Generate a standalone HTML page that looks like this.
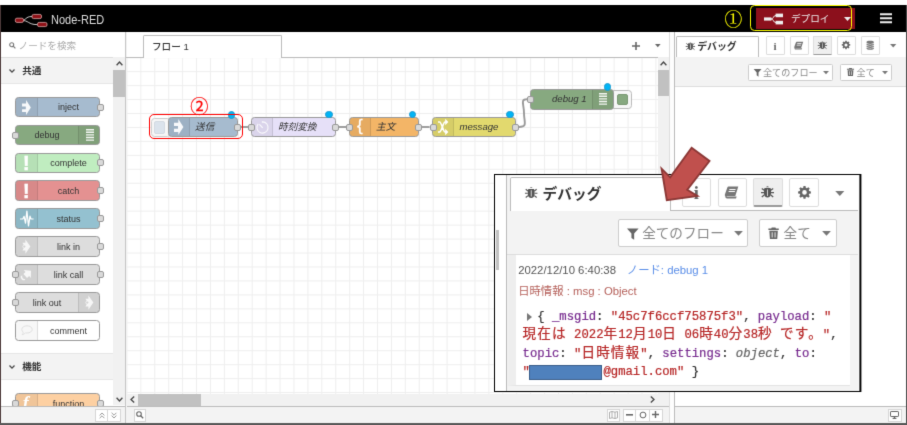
<!DOCTYPE html>
<html lang="ja"><head><meta charset="utf-8"><title>Node-RED</title>
<style>
*{box-sizing:border-box;margin:0;padding:0}
html,body{width:907px;height:425px;overflow:hidden;background:#fff}
body{filter:url(#soft)}
body{position:relative;font-family:"Liberation Sans","Noto Sans CJK JP",sans-serif;color:#555}
.a{position:absolute}
svg{position:absolute;overflow:visible}
/* header */
#hdr{left:1px;top:4.600px;width:906px;height:27.800px;background:#000}
#title{left:51px;top:13.8px;font-size:11px;line-height:13px;color:#ddd;white-space:nowrap;transform:scaleY(1.08);transform-origin:0 50%}
#deploy{left:756px;top:8.2px;width:99px;height:20.7px;background:#8c101c}
#deploytxt{left:791px;top:11.5px;font-size:9.6px;line-height:14px;color:#eee;white-space:nowrap;letter-spacing:0}
#ybox{left:750.3px;top:5.2px;width:102px;height:26.2px;border:1.2px solid #ffff00;border-radius:4.5px}
.circ{font-size:17px;line-height:20px;white-space:nowrap;font-family:"Noto Sans CJK JP","Liberation Sans",sans-serif}
/* palette */
#psearch{left:1.3px;top:32.4px;width:124px;height:25.2px;background:#fff;border-bottom:1px solid #ddd}
#psearchtxt{left:18.6px;top:40px;font-size:9.6px;line-height:12px;color:#aaa;white-space:nowrap}
.cat{left:1.3px;width:112px;height:26.6px;background:#f3f3f3;border-bottom:1px solid #e6e6e6}
.cattxt{left:22.2px;font-size:9.6px;line-height:12px;color:#333;font-weight:700;white-space:nowrap}
.sb{background:#f1f1f1}
.thumb{background:#c1c1c1}
.pn{left:15.4px;width:84.8px;height:20.8px;border:1px solid #999;border-radius:3.5px;font-size:9px;line-height:18.8px;color:#333;text-align:center;white-space:nowrap}
.ic{position:absolute;top:0;width:21.5px;height:100%;background:rgba(0,0,0,.05)}
.ic.l{left:0;border-right:1px solid rgba(0,0,0,.1);border-radius:2.5px 0 0 2.5px}
.ic.r{right:0;border-left:1px solid rgba(0,0,0,.1);border-radius:0 2.5px 2.5px 0}
.lb{position:absolute;top:0;height:100%}
.pn .lb{top:.6px}
.lb.L{left:21.5px;right:0}
.lb.R{left:0;right:21.5px}
.pt{position:absolute;width:7px;height:7px;background:#d9d9d9;border:1px solid #999;border-radius:2px;top:5.9px}
.pt.o{right:-4.6px}.pt.i{left:-4.6px}
/* flow nodes */
.fn{height:20.8px;border:1px solid #999;border-radius:3.5px;font-size:9.6px;line-height:18.8px;color:#333;font-style:italic;white-space:nowrap}
.fn .ic{width:20.800px}
.fn .lb.L{left:20.800px}.fn .lb.R{right:20.800px}
.fn .pt.o{right:-3.700px}.fn .pt.i{left:-3.700px}
.fn .lb{text-align:left;padding-left:5.300px}
.fn .lb.R{text-align:right;padding-right:5.5px;padding-left:0}
.dot{width:7.6px;height:7.6px;border-radius:50%;background:#00b4f5;border:.8px solid #1c9ad0}
/* sidebar */
.sbtn{top:36px;width:19px;height:18.8px;border:1px solid #ddd;background:#fff;border-radius:1px}
.tbtn{background:#fff;border:1px solid #ccc;border-radius:1.5px;color:#888;white-space:nowrap}
.foot{top:405.5px;height:18px;background:#f3f3f3;border-top:1px solid #bbb}
.fbtn{top:408.600px;height:13px;background:#fff;border:1px solid #d6d6d6}
.ibtn{top:178.200px;width:29.200px;height:28.800px;border:1px solid #ddd;background:#fff;border-radius:2px}
#dbg{-webkit-text-stroke:.22px}
#dbg .j{font-size:13.600px;line-height:10px;letter-spacing:1.120px}#dbg .k{color:#792e90}#dbg .s{color:#b72828}#dbg .m{color:#666;font-style:italic}
</style></head><body>

<svg width="0" height="0" style="position:absolute"><filter id="soft" x="0" y="0" width="100%" height="100%" filterUnits="objectBoundingBox" color-interpolation-filters="sRGB"><feConvolveMatrix order="3" kernelMatrix="0.0114 0.084 0.0114 0.084 0.6184 0.084 0.0114 0.084 0.0114" divisor="1" edgeMode="duplicate" preserveAlpha="true"/></filter></svg>
<!-- edges -->
<div class="a" style="left:0;top:4.600px;width:1.200px;height:421px;background:#4d3a3a"></div>

<!-- HEADER -->
<div id="hdr" class="a"></div>
<svg style="left:14.5px;top:14.3px" width="33" height="13" viewBox="0 0 33 13">
 <path d="M6 6.3 C12 6.3 10 2.5 17 2.5 M6 6.3 C14 6.3 13 10.6 22 10.6" fill="none" stroke="#ddd" stroke-width="0.9"/>
 <rect x="0.3" y="4.2" width="8.2" height="4.2" rx="1.6" fill="#8f1218" stroke="#dba3a3" stroke-width=".8"/>
 <rect x="17" y="0.4" width="9.5" height="4.2" rx="1.6" fill="#8f1218" stroke="#dba3a3" stroke-width=".8"/>
 <rect x="22.5" y="8.4" width="9.5" height="4.2" rx="1.6" fill="#8f1218" stroke="#dba3a3" stroke-width=".8"/>
</svg>
<div id="title" class="a">Node-RED</div>
<div id="deploy" class="a"></div>
<svg style="left:764px;top:12.5px" width="20" height="12" viewBox="0 0 20 12">
 <path d="M7 6 C10 6 9 2.4 12 2.4 M7 6 C10 6 9 9.6 12 9.6" fill="none" stroke="#eee" stroke-width="1"/>
 <rect x="0" y="4.4" width="7.4" height="3.2" fill="#eee"/>
 <rect x="11.6" y="0.6" width="7.4" height="3.6" fill="#eee"/>
 <rect x="11.6" y="7.8" width="7.4" height="3.6" fill="#eee"/>
</svg>
<div id="deploytxt" class="a">デプロイ</div>
<svg style="left:843.5px;top:17px" width="7" height="4" viewBox="0 0 7 4"><path d="M0 0H7L3.5 4Z" fill="#eee"/></svg>
<div id="ybox" class="a"></div>
<div class="a circ" style="left:724.400px;top:9px;color:#ffff00;font-size:17.800px;font-family:'Noto Serif CJK JP','Liberation Serif',serif;-webkit-text-stroke:.2px #ff0">①</div>
<svg style="left:880.400px;top:13.200px" width="12" height="10.400" viewBox="0 0 12 10"><path d="M0 0H12V2H0ZM0 4H12V6H0ZM0 8H12V10H0Z" fill="#eee"/></svg>

<!-- PALETTE -->
<div id="psearch" class="a"></div>
<svg style="left:9.2px;top:41.6px" width="7" height="7" viewBox="0 0 7 7"><circle cx="2.7" cy="2.7" r="2" fill="none" stroke="#777" stroke-width="1.1"/><path d="M4.2 4.2L6.4 6.4" stroke="#777" stroke-width="1.2"/></svg>
<div id="psearchtxt" class="a">ノードを検索</div>

<div class="a cat" style="top:57.6px;height:26.4px"></div>
<svg style="left:8.5px;top:68.5px" width="6" height="4" viewBox="0 0 6 4"><path d="M.5 .5L3 3.2L5.5 .5" fill="none" stroke="#444" stroke-width="1.25"/></svg>
<div class="a cattxt" style="top:64.6px">共通</div>
<div class="a cat" style="top:353.4px;border-top:1px solid #e6e6e6"></div>
<svg style="left:8.5px;top:365px" width="6" height="4" viewBox="0 0 6 4"><path d="M.5 .5L3 3.2L5.5 .5" fill="none" stroke="#444" stroke-width="1.25"/></svg>
<div class="a cattxt" style="top:360.9px">機能</div>

<!-- palette scrollbar -->
<div class="a sb" style="left:113.2px;top:57.4px;width:12px;height:348px"></div>
<div class="a thumb" style="left:113.4px;top:69.8px;width:11.6px;height:27.4px"></div>
<svg style="left:115.6px;top:61px" width="7" height="5" viewBox="0 0 7 5"><path d="M.6 4.2L3.5 1L6.4 4.2" fill="none" stroke="#444" stroke-width="1.3"/></svg>
<svg style="left:115.600px;top:397px" width="7" height="5" viewBox="0 0 7 5"><path d="M.6 .8L3.5 4L6.4 .8" fill="none" stroke="#444" stroke-width="1.3"/></svg>

<!-- inject -->
<div class="a pn" style="top:96.7px;background:#a6bbcf"><div class="ic l"></div><div class="lb L">inject</div><div class="pt o"></div>
 <svg style="left:5.2px;top:1.9px" width="8.9" height="15" viewBox="0 0 9.4 16"><path d="M0 3.8H4.3V0L9.4 8L4.3 16V12.9H0V9.8H4V7H0Z" fill="#fff" fill-opacity=".92"/></svg></div>
<!-- debug -->
<div class="a pn" style="top:124.7px;background:#87a980"><div class="ic r"></div><div class="lb R">debug</div><div class="pt i"></div>
 <svg style="right:5.5px;top:3.6px" width="8" height="12" viewBox="0 0 8 12"><path d="M0 0H8V1.4H0ZM0 2.6H8V4H0ZM0 5.2H8V6.6H0ZM0 7.8H8V9.2H0ZM0 10.4H8V11.8H0Z" fill="#fff" fill-opacity=".9"/></svg></div>
<!-- complete -->
<div class="a pn" style="top:152.5px;background:#c0edc0"><div class="ic l"></div><div class="lb L">complete</div><div class="pt o"></div>
 <div class="a" style="left:-.9px;top:-.5px;width:21.500px;text-align:center;font:bold 19.400px/20px 'Liberation Sans',sans-serif;color:#fff;-webkit-text-stroke:.55px #fff">!</div></div>
<!-- catch -->
<div class="a pn" style="top:180.4px;background:#e49191"><div class="ic l"></div><div class="lb L">catch</div><div class="pt o"></div>
 <div class="a" style="left:-.9px;top:-.5px;width:21.500px;text-align:center;font:bold 19.400px/20px 'Liberation Sans',sans-serif;color:#fff;-webkit-text-stroke:.55px #fff">!</div></div>
<!-- status -->
<div class="a pn" style="top:208.4px;background:#94c1d0"><div class="ic l"></div><div class="lb L">status</div><div class="pt o"></div>
 <svg style="left:3.4px;top:.8px" width="13.6" height="17" viewBox="0 0 13.6 17"><path d="M0 9H2.8L4.1 6.4L5.5 13.2L6.9 1L8.5 16L10 6.200L11 9H13.600" fill="none" stroke="#fff" stroke-width="1.25" stroke-linejoin="round"/></svg></div>
<!-- link in -->
<div class="a pn" style="top:236.3px;background:#ddd"><div class="ic l"></div><div class="lb L">link in</div><div class="pt o"></div>
 <svg style="left:5.600px;top:1.600px" width="8.600" height="15.200" viewBox="0 0 8.6 15.2"><path d="M.4 3.800H3.400V.4L8.400 7.600L3.400 14.800V11.400H.4L2.800 7.600Z" fill="#fff" fill-opacity=".8"/><circle cx="2.300" cy="7.600" r="1.500" fill="#d2d2d2" stroke="#fff" stroke-opacity=".8" stroke-width=".8"/></svg></div>
<!-- link call -->
<div class="a pn" style="top:264.2px;background:#ddd"><div class="ic l"></div><div class="lb L">link call</div><div class="pt o"></div><div class="pt i"></div>
 <svg style="left:4.400px;top:2px" width="12" height="14.600" viewBox="0 0 12 14.6"><g transform="rotate(-42 6 7.3)" fill="#fff" fill-opacity=".82"><path d="M3.600 4.600H6.400V2L11.400 7.300L6.400 12.600V10H3.600Z"/><path d="M.2 4.400A3.600 3.600 0 0 0 .2 10.200L1.800 9.400A2.200 2.200 0 0 1 1.800 5.200Z"/></g></svg></div>
<!-- link out -->
<div class="a pn" style="top:292.1px;background:#ddd"><div class="ic r"></div><div class="lb R">link out</div><div class="pt i"></div>
 <svg style="right:5.600px;top:1.600px" width="8.600" height="15.200" viewBox="0 0 8.6 15.2"><path d="M.4 3.800H3.400V.4L8.400 7.600L3.400 14.800V11.400H.4L2.800 7.600Z" fill="#fff" fill-opacity=".8"/><circle cx="2.300" cy="7.600" r="1.500" fill="#d2d2d2" stroke="#fff" stroke-opacity=".8" stroke-width=".8"/></svg></div>
<!-- comment -->
<div class="a pn" style="top:320px;background:#fff"><div class="ic l" style="background:rgba(0,0,0,.03)"></div><div class="lb L">comment</div>
 <svg style="left:4.5px;top:4.2px" width="12" height="11" viewBox="0 0 12 11"><path d="M6 .8C9 .8 11.2 2.4 11.2 4.4C11.2 6.4 9 8 6 8C5.4 8 4.9 7.95 4.4 7.85C3.6 8.8 2.4 9.6 1.2 9.6C2 8.8 2.3 8 2.2 7.1C1.3 6.4 .8 5.4 .8 4.4C.8 2.4 3 .8 6 .8Z" fill="none" stroke="#ddd" stroke-width=".9"/></svg></div>
<!-- function -->
<div class="a pn" style="top:393.2px;background:#fdd0a2"><div class="ic l"></div><div class="lb L">function</div><div class="pt o"></div><div class="pt i"></div>
 <div class="a" style="left:6.400px;top:-2.500px;font:italic bold 18px/22px 'Liberation Serif',serif;color:#fff">f</div></div>

<!-- palette footer -->
<div class="a foot" style="left:1.3px;width:124px"></div>
<div class="a fbtn" style="left:95px;width:13.2px"></div>
<div class="a fbtn" style="left:107.4px;width:13.2px"></div>
<svg style="left:98.6px;top:411.6px" width="6" height="7" viewBox="0 0 6 7"><path d="M.6 3.4L3 1L5.4 3.4M.6 6.2L3 3.8L5.4 6.2" fill="none" stroke="#999" stroke-width="1"/></svg>
<svg style="left:111px;top:411.6px" width="6" height="7" viewBox="0 0 6 7"><path d="M.6 .8L3 3.2L5.4 .8M.6 3.6L3 6L5.4 3.6" fill="none" stroke="#999" stroke-width="1"/></svg>
<!-- divider -->
<div class="a" style="left:125.2px;top:32.4px;width:1.8px;height:391px;background:#f3f3f3;border-left:1px solid #c6c6c6"></div>
<!--PALETTE_END-->
<!-- WORKSPACE -->
<div class="a" style="left:127px;top:57.1px;width:531px;height:337px;background-color:#fff;background-image:linear-gradient(to right,#eee 0,#eee 1px,transparent 1px),linear-gradient(to bottom,#eee 0,#eee 1px,transparent 1px);background-size:13.930px 13.960px;background-position:-.6px .2px"></div>
<!-- tab bar -->
<div class="a" style="left:126px;top:56.600px;width:544px;height:1px;background:#bbb"></div>
<div class="a" style="left:142.6px;top:35.4px;width:139.6px;height:22.2px;background:#fff;border:1px solid #bbb;border-bottom:none;border-radius:1.5px 1.5px 0 0"></div>
<div class="a" style="left:152px;top:40.4px;font-size:9.6px;line-height:13px;color:#333;white-space:nowrap;font-weight:500">フロー 1</div>
<svg style="left:631.5px;top:42.2px" width="8" height="8" viewBox="0 0 8 8"><path d="M3.2 0H4.8V3.2H8V4.8H4.8V8H3.2V4.8H0V3.2H3.2Z" fill="#666"/></svg>
<svg style="left:655.200px;top:43.800px" width="5.600" height="3.400" viewBox="0 0 7 4"><path d="M0 0H7L3.5 3.8Z" fill="#666"/></svg>

<!-- wires -->
<svg style="left:0;top:0" width="907" height="425" viewBox="0 0 907 425">
 <g fill="none" stroke="#999" stroke-width="1.9">
  <path d="M241 127H248"/><path d="M338.5 127H346"/><path d="M422 127H429.6"/>
  <path d="M519 127C528 127 524 122 524 113S520 99.3 527 99.3"/>
 </g>
</svg>

<!-- 送信 -->
<div class="a" style="left:151.4px;top:117.6px;width:20px;height:19px;background:#f7f7f7;border:1px solid #ccc;border-radius:3.5px"></div>
<div class="a" style="left:154.2px;top:120.8px;width:10.8px;height:12.8px;background:#dbe3ec;border:1px solid #d3dae2;border-radius:2px"></div>
<div class="a fn" style="left:168px;top:116.7px;width:70.2px;background:#a6bbcf"><div class="ic l"></div><div class="lb L">送信</div><div class="pt o"></div>
 <svg style="left:4.5px;top:1.4px" width="9.4" height="16" viewBox="0 0 9.4 16"><path d="M0 3.8H4.3V0L9.4 8L4.3 16V12.9H0V9.8H4V7H0Z" fill="#fff" fill-opacity=".92"/></svg></div>
<!-- 時刻変換 -->
<div class="a fn" style="left:251px;top:116.7px;width:85.2px;background:#e6e0f8"><div class="ic l"></div><div class="lb L">時刻変換</div><div class="pt o"></div><div class="pt i"></div>
 <svg style="left:4px;top:3.200px" width="13" height="13" viewBox="0 0 13 13"><path d="M6.500 .9A5.600 5.600 0 1 1 2.200 2.900" fill="none" stroke="#fff" stroke-opacity=".85" stroke-width="1.100"/><path d="M6.700 6.900L3.400 3.300" stroke="#fff" stroke-opacity=".85" stroke-width="1.200"/><circle cx="6.500" cy="1" r=".8" fill="#fff" fill-opacity=".85"/></svg></div>
<!-- 主文 -->
<div class="a fn" style="left:349px;top:116.7px;width:70px;background:#f3b567"><div class="ic l"></div><div class="lb L">主文</div><div class="pt o"></div><div class="pt i"></div>
 <div class="a" style="left:-.6px;top:-1.900px;width:20.800px;text-align:center;font:normal 17px/20px 'Liberation Sans',sans-serif;font-style:normal;color:#fff;-webkit-text-stroke:.3px #fff">{</div></div>
<!-- message -->
<div class="a fn" style="left:432.4px;top:116.7px;width:84px;background:#e2d96e"><div class="ic l"></div><div class="lb L">message</div><div class="pt o"></div><div class="pt i"></div>
 <svg style="left:4.600px;top:1.400px" width="10.200" height="16" viewBox="0 0 10.2 16"><path d="M0 3H1.600C3.400 3 5.400 13 7 13H8M0 13H1.600C3.400 13 5.400 3 7 3H8" fill="none" stroke="#fff" stroke-width="1.700" stroke-linejoin="round"/><path d="M7.200 -.2L10.400 3L7.200 6.200ZM7.200 9.800L10.400 13L7.200 16.200Z" fill="#fff"/></svg></div>
<!-- debug 1 -->
<div class="a" style="left:610px;top:90.2px;width:22.4px;height:18.4px;background:#f7f7f7;border:1px solid #bbb;border-radius:3.5px"></div>
<div class="a" style="left:617.4px;top:93.6px;width:10.8px;height:11.6px;background:#87a980;border:1px solid #7a9974;border-radius:2px"></div>
<div class="a fn" style="left:529.8px;top:88.9px;width:84.2px;background:#87a980"><div class="ic r"></div><div class="lb R">debug 1</div><div class="pt i"></div>
 <svg style="right:6px;top:3.4px" width="8" height="12" viewBox="0 0 8 12"><path d="M0 0H8V1.4H0ZM0 2.6H8V4H0ZM0 5.2H8V6.6H0ZM0 7.8H8V9.2H0ZM0 10.4H8V11.8H0Z" fill="#fff" fill-opacity=".9"/></svg></div>
<!-- changed dots -->
<div class="a dot" style="left:227.5px;top:111px"></div>
<div class="a dot" style="left:325.2px;top:110.7px"></div>
<div class="a dot" style="left:408.5px;top:110.7px"></div>
<div class="a dot" style="left:506.2px;top:110.9px"></div>
<div class="a dot" style="left:603.8px;top:83px"></div>
<!-- red annotation -->
<div class="a" style="left:149px;top:114px;width:94px;height:24.6px;border:1.2px solid #f00;border-radius:5px"></div>
<div class="a circ" style="left:190.300px;top:95px;color:#f00;font-size:18.200px;-webkit-text-stroke:.25px #f00">②</div>

<!-- ws scrollbars -->
<div class="a sb" style="left:657.6px;top:57.2px;width:12px;height:337px"></div>
<div class="a thumb" style="left:657.8px;top:69.8px;width:11.6px;height:26.2px"></div>
<svg style="left:660px;top:61px" width="7" height="5" viewBox="0 0 7 5"><path d="M.6 4.2L3.5 1L6.4 4.2" fill="none" stroke="#444" stroke-width="1.3"/></svg>
<div class="a sb" style="left:127px;top:393.6px;width:542.6px;height:12.4px"></div>
<div class="a thumb" style="left:138.2px;top:394px;width:63.2px;height:11.6px"></div>
<svg style="left:129.6px;top:396.4px" width="5" height="7" viewBox="0 0 5 7"><path d="M4.2 .6L1 3.5L4.2 6.4" fill="none" stroke="#444" stroke-width="1.3"/></svg>
<svg style="left:649.8px;top:396.4px" width="5" height="7" viewBox="0 0 5 7"><path d="M.8 .6L4 3.5L.8 6.4" fill="none" stroke="#444" stroke-width="1.3"/></svg>
<!-- ws footer -->
<div class="a foot" style="left:127px;width:543px"></div>
<div class="a fbtn" style="left:133.6px;width:12.4px"></div>
<svg style="left:136.2px;top:411.4px" width="8" height="8" viewBox="0 0 8 8"><circle cx="3" cy="3" r="2.3" fill="none" stroke="#666" stroke-width="1.1"/><path d="M4.7 4.7L7.2 7.2" stroke="#666" stroke-width="1.3"/></svg>
<div class="a fbtn" style="left:606.5px;width:13.2px"></div>
<svg style="left:608.6px;top:410.8px" width="9" height="8" viewBox="0 0 9 8"><path d="M.5 1.2L3 .5L6 1.2L8.5 .5V6.8L6 7.5L3 6.8L.5 7.5ZM3 .5V6.8M6 1.2V7.5" fill="none" stroke="#999" stroke-width=".8"/></svg>
<div class="a fbtn" style="left:622.8px;width:13.4px"></div>
<div class="a fbtn" style="left:635.2px;width:14.4px"></div>
<div class="a fbtn" style="left:648.6px;width:14px"></div>
<svg style="left:626.2px;top:414.2px" width="7" height="2" viewBox="0 0 7 2"><rect width="7" height="1.6" fill="#666"/></svg>
<svg style="left:638.6px;top:411.2px" width="8" height="8" viewBox="0 0 8 8"><circle cx="4" cy="4" r="2.9" fill="none" stroke="#666" stroke-width="1"/></svg>
<svg style="left:652.2px;top:411.4px" width="7" height="7" viewBox="0 0 7 7"><path d="M2.8 0H4.2V2.8H7V4.2H4.2V7H2.8V4.2H0V2.8H2.8Z" fill="#666"/></svg>
<!-- separator -->
<div class="a" style="left:669.400px;top:32.400px;width:5.200px;height:391px;background:#fdfdfd;border-left:1px solid #ddd;border-right:1px solid #bbb"></div>
<!--WORKSPACE_END-->
<!-- SIDEBAR -->

<div class="a" style="left:674.600px;top:32.400px;width:231.600px;height:374.400px;background:#fff"></div>
<div class="a" style="left:674.6px;top:56.6px;width:231px;height:1px;background:#bbb"></div>
<div class="a" style="left:676.4px;top:35.6px;width:82.2px;height:22px;background:#fff;border:1px solid #bbb;border-bottom:none;border-radius:1.5px 1.5px 0 0"></div>
<svg style="left:684.800px;top:41.200px;color:#555" width="10.800" height="10.800" viewBox="0 0 15 15" fill="#555"><path d="M6 2.2A1.9 1.9 0 0 1 9 2.2ZM4.6 3H10.4C10.8 3.6 11 4.4 11 5.2V9C11 11 9.4 12.4 7.5 12.4S4 11 4 9V5.2C4 4.4 4.2 3.6 4.6 3ZM7.1 4.4V11H7.9V4.4Z" fill-rule="evenodd"/><path d="M4.2 5.2L1.8 3.4M4 7.6H1M4.2 10L1.8 12M10.8 5.2L13.2 3.4M11 7.6H14M10.8 10L13.2 12" fill="none" stroke="currentColor" stroke-width="1.2"/></svg>
<div class="a" style="left:697.2px;top:40.2px;font-size:9.9px;line-height:13px;color:#333;font-weight:700;white-space:nowrap">デバッグ</div>
<div class="a sbtn" style="left:765.6px"></div>
<div class="a sbtn" style="left:789.5px"></div>
<div class="a sbtn" style="left:813.3px;background:#efefef;border-bottom:1.6px solid #999"></div>
<div class="a sbtn" style="left:836.9px"></div>
<div class="a sbtn" style="left:860.6px"></div>
<div class="a" style="left:765.600px;top:36.800px;width:19px;text-align:center;font:bold 11px/18px 'Liberation Serif',serif;color:#666">i</div>
<svg style="left:793.200px;top:39.600px" width="11.600" height="11.600" viewBox="0 0 15 15" fill="#777"><path d="M5 2.2H13.2L10.6 10.4H2.6C1.6 10.4 1.4 9.6 1.7 8.8L3.6 3.4C3.9 2.6 4.4 2.2 5 2.2ZM5.6 4.3L5.3 5.2H10.7L11 4.3ZM5 6.1L4.7 7H10.1L10.4 6.100Z" fill-rule="evenodd"/><path d="M2 10.2C1.8 11.6 2.4 12.4 3.6 12.4H11.2L11.8 10.800H3.800C3.200 10.800 3 10.600 3.100 10.200Z"/></svg>
<svg style="left:817.400px;top:39.800px;color:#555" width="10.800" height="10.800" viewBox="0 0 15 15" fill="#555"><path d="M6 2.2A1.9 1.9 0 0 1 9 2.2ZM4.6 3H10.4C10.8 3.6 11 4.4 11 5.2V9C11 11 9.4 12.4 7.5 12.4S4 11 4 9V5.2C4 4.4 4.2 3.6 4.6 3ZM7.1 4.4V11H7.9V4.4Z" fill-rule="evenodd"/><path d="M4.2 5.2L1.8 3.4M4 7.6H1M4.2 10L1.8 12M10.8 5.2L13.2 3.4M11 7.6H14M10.8 10L13.2 12" fill="none" stroke="currentColor" stroke-width="1.2"/></svg>
<svg style="left:841.4px;top:40.4px" width="10" height="10" viewBox="0 0 15 15" fill="#666"><path d="M6.500 1H8.500L8.800 2.700L9.900 3.150L11.300 2.150L12.750 3.600L11.750 5L12.200 6.100L13.900 6.400V8.400L12.200 8.700L11.750 9.800L12.750 11.200L11.300 12.650L9.900 11.650L8.800 12.100L8.500 13.800H6.500L6.200 12.100L5.100 11.650L3.700 12.650L2.250 11.200L3.250 9.800L2.800 8.700L1.100 8.400V6.400L2.800 6.100L3.250 5L2.250 3.600L3.700 2.150L5.100 3.150L6.200 2.700ZM7.500 5.100A2.300 2.300 0 1 0 7.500 9.700A2.300 2.300 0 1 0 7.500 5.100Z" fill-rule="evenodd"/></svg>
<svg style="left:865px;top:40.2px" width="10.4" height="10.4" viewBox="0 0 15 15" fill="#777"><path d="M7.500 1C10.500 1 12.800 1.800 12.800 2.900V3.700C12.800 4.800 10.500 5.600 7.500 5.600S2.200 4.800 2.200 3.700V2.900C2.200 1.800 4.500 1 7.500 1ZM2.200 5.200C3.200 6.100 5.200 6.500 7.500 6.500S11.800 6.100 12.800 5.200V6.600C12.800 7.700 10.500 8.500 7.500 8.500S2.200 7.700 2.200 6.600ZM2.200 8.100C3.200 9 5.200 9.400 7.500 9.400S11.800 9 12.800 8.100V9.500C12.800 10.600 10.500 11.400 7.500 11.400S2.200 10.600 2.200 9.500ZM2.200 11C3.200 11.900 5.200 12.300 7.500 12.300S11.800 11.900 12.800 11V12.200C12.800 13.300 10.500 14.100 7.500 14.100S2.200 13.300 2.200 12.200Z"/></svg>
<svg style="left:890.4px;top:44px" width="6.4" height="3.6" viewBox="0 0 7 4"><path d="M0 0H7L3.500 3.800Z" fill="#777"/></svg>
<!-- toolbar -->
<div class="a" style="left:674.6px;top:57.4px;width:231px;height:29.4px;background:#f3f3f3;border-bottom:1px solid #ddd"></div>
<div class="a tbtn" style="left:747.6px;top:63.6px;width:85.6px;height:17.4px"></div>
<svg style="left:753.200px;top:68px" width="9.200" height="9.200" viewBox="0 0 14 14" fill="#666"><path d="M1 1.500H13L8.400 6.800V13.200L5.600 11.200V6.800Z"/></svg>
<div class="a" style="left:763px;top:66.900px;font-size:9.100px;line-height:12px;color:#888;white-space:nowrap">全てのフロー</div>
<svg style="left:823.4px;top:70.8px" width="6" height="3.400" viewBox="0 0 7 4"><path d="M0 0H7L3.500 3.800Z" fill="#777"/></svg>
<div class="a tbtn" style="left:840.4px;top:63.6px;width:51.2px;height:17.4px"></div>
<svg style="left:845.800px;top:67.400px" width="9" height="9.700" viewBox="0 0 14 14" fill="#666"><path d="M5 1H9L9.500 2.200H12.500V3.600H1.500V2.200H4.500ZM2.500 4.400H11.500L10.900 13.400H3.100ZM5 6V11.800H5.900V6ZM8.100 6V11.800H9V6Z" fill-rule="evenodd"/></svg>
<div class="a" style="left:856.600px;top:66.900px;font-size:9.100px;line-height:12px;color:#888;white-space:nowrap">全て</div>
<svg style="left:881.8px;top:70.8px" width="6" height="3.400" viewBox="0 0 7 4"><path d="M0 0H7L3.500 3.800Z" fill="#777"/></svg>
<!-- sidebar footer -->
<div class="a foot" style="left:674.600px;width:231.600px"></div>
<div class="a fbtn" style="left:888.200px;width:13.400px"></div>
<svg style="left:890.400px;top:411.400px" width="9" height="8" viewBox="0 0 9 8"><rect x=".5" y=".5" width="8" height="5" rx=".6" fill="none" stroke="#666" stroke-width="1"/><path d="M2.600 7.400H6.400" stroke="#666" stroke-width="1.100"/><path d="M4.500 5.500V7.400" stroke="#666" stroke-width="1.400"/></svg>
<!--SIDEBAR_END-->
<!--FOOTER-->
<!-- INSET -->
<div class="a" style="left:495px;top:175px;width:366px;height:216px;background:#fff"></div>
 <!-- left fragment -->
 <div class="a thumb" style="left:496px;top:229.600px;width:3.400px;height:40px"></div>
 <div class="a" style="left:505.800px;top:175px;width:4.600px;height:216px;background:#f3f3f3;border-left:1px solid #bbb"></div>
 <!-- tab bar -->
 <div class="a" style="left:510px;top:209.800px;width:348px;height:1px;background:#bbb"></div>
 <div class="a" style="left:510.200px;top:177.200px;width:160.800px;height:33.600px;background:#fff;border:1px solid #bbb;border-bottom:none;border-radius:2px 2px 0 0"></div>
 <svg style="left:524.200px;top:186.400px;color:#555" width="14.400" height="14.400" viewBox="0 0 15 15" fill="#555"><path d="M6 2.2A1.9 1.9 0 0 1 9 2.2ZM4.6 3H10.4C10.8 3.6 11 4.4 11 5.2V9C11 11 9.4 12.4 7.5 12.4S4 11 4 9V5.2C4 4.4 4.2 3.6 4.6 3ZM7.1 4.4V11H7.9V4.4Z" fill-rule="evenodd"/><path d="M4.2 5.2L1.8 3.4M4 7.6H1M4.2 10L1.8 12M10.8 5.2L13.2 3.4M11 7.6H14M10.8 10L13.2 12" fill="none" stroke="currentColor" stroke-width="1.2"/></svg>
 <div class="a" style="left:542.600px;top:183.600px;font-size:14.700px;line-height:20px;color:#333;font-weight:700;white-space:nowrap">デバッグ</div>
 <div class="a ibtn" style="left:681.800px"></div>
 <div class="a ibtn" style="left:717.600px"></div>
 <div class="a ibtn" style="left:753.400px;background:#efefef;border-bottom:2.200px solid #999"></div>
 <div class="a ibtn" style="left:789.400px"></div>
 <div class="a" style="left:681.800px;top:178.600px;width:29.200px;text-align:center;font:bold 18.500px/28px 'Liberation Serif',serif;color:#666">i</div>
 <svg style="left:723.400px;top:184.200px" width="17.400" height="17.400" viewBox="0 0 15 15" fill="#777"><path d="M5 2.2H13.2L10.6 10.4H2.6C1.6 10.4 1.4 9.6 1.7 8.8L3.6 3.4C3.9 2.6 4.4 2.2 5 2.2ZM5.6 4.3L5.3 5.2H10.7L11 4.3ZM5 6.1L4.7 7H10.1L10.4 6.100Z" fill-rule="evenodd"/><path d="M2 10.2C1.8 11.6 2.4 12.4 3.6 12.4H11.2L11.8 10.800H3.800C3.200 10.800 3 10.600 3.100 10.200Z"/></svg>
 <svg style="left:760.400px;top:185.200px;color:#555" width="15" height="15" viewBox="0 0 15 15" fill="#555"><path d="M6 2.2A1.9 1.9 0 0 1 9 2.2ZM4.6 3H10.4C10.8 3.6 11 4.4 11 5.2V9C11 11 9.4 12.4 7.5 12.4S4 11 4 9V5.2C4 4.4 4.2 3.6 4.6 3ZM7.1 4.4V11H7.9V4.4Z" fill-rule="evenodd"/><path d="M4.2 5.2L1.8 3.4M4 7.6H1M4.2 10L1.8 12M10.8 5.2L13.2 3.4M11 7.6H14M10.8 10L13.2 12" fill="none" stroke="currentColor" stroke-width="1.2"/></svg>
 <svg style="left:796.600px;top:185.400px" width="15" height="15" viewBox="0 0 15 15" fill="#666"><path d="M6.500 1H8.500L8.800 2.700L9.900 3.150L11.300 2.150L12.750 3.600L11.750 5L12.200 6.100L13.900 6.400V8.400L12.200 8.700L11.750 9.800L12.750 11.200L11.300 12.650L9.900 11.650L8.800 12.100L8.500 13.800H6.500L6.200 12.100L5.100 11.650L3.700 12.650L2.250 11.200L3.250 9.800L2.800 8.700L1.100 8.400V6.400L2.800 6.100L3.250 5L2.250 3.600L3.700 2.150L5.100 3.150L6.200 2.700ZM7.500 5.100A2.300 2.300 0 1 0 7.500 9.700A2.300 2.300 0 1 0 7.500 5.100Z" fill-rule="evenodd"/></svg>
 <svg style="left:835px;top:190.800px" width="9.600" height="5.200" viewBox="0 0 7 4"><path d="M0 0H7L3.500 3.800Z" fill="#777"/></svg>
 <!-- toolbar -->
 <div class="a" style="left:506.800px;top:210.800px;width:351.200px;height:44.600px;background:#f3f3f3;border-bottom:1px solid #ddd"></div>
 <div class="a tbtn" style="left:618.400px;top:219.400px;width:129.200px;height:27.200px;border-radius:2px"></div>
 <svg style="left:626.400px;top:226.800px" width="13.600" height="13.600" viewBox="0 0 14 14" fill="#666"><path d="M1 1.500H13L8.400 6.800V13.200L5.600 11.200V6.800Z"/></svg>
 <div class="a" style="left:642.200px;top:224.600px;font-size:13.600px;line-height:18px;color:#888;white-space:nowrap">全てのフロー</div>
 <svg style="left:733.600px;top:231px" width="9" height="5" viewBox="0 0 7 4"><path d="M0 0H7L3.500 3.800Z" fill="#777"/></svg>
 <div class="a tbtn" style="left:759px;top:219.400px;width:77.800px;height:27.200px;border-radius:2px"></div>
 <svg style="left:767.400px;top:225.800px" width="13.200" height="14.200" viewBox="0 0 14 14" fill="#666"><path d="M5 1H9L9.500 2.200H12.500V3.600H1.500V2.200H4.500ZM2.500 4.400H11.500L10.900 13.400H3.100ZM5 6V11.800H5.900V6ZM8.100 6V11.800H9V6Z" fill-rule="evenodd"/></svg>
 <div class="a" style="left:783.600px;top:224.600px;font-size:13.600px;line-height:18px;color:#888;white-space:nowrap">全て</div>
 <svg style="left:822px;top:231px" width="9" height="5" viewBox="0 0 7 4"><path d="M0 0H7L3.500 3.800Z" fill="#777"/></svg>
 <!-- message -->
 <div class="a" style="left:506.800px;top:255.400px;width:351.200px;height:136px;background:#f3f3f3"></div>
 <div class="a" style="left:507.600px;top:255.400px;width:342.600px;height:130.400px;background:#fff;border-left:8px solid #eee;border-bottom:1px solid #e4e4e4"></div>
 <div class="a" style="left:518.200px;top:262.600px;font-size:11.350px;line-height:14px;color:#555;white-space:nowrap">2022/12/10 6:40:38</div>
 <div class="a" style="left:626.800px;top:262.600px;font-size:11.350px;line-height:14px;color:#5a8ee8;white-space:nowrap">ノード: debug 1</div>
 <div class="a" style="left:518.200px;top:283.600px;font-size:11.350px;line-height:14px;color:#b5605a;white-space:nowrap">日時情報 : msg : Object</div>
 <svg style="left:526.800px;top:312.600px" width="5" height="8" viewBox="0 0 5 8"><path d="M0 0L5 4L0 8Z" fill="#777"/></svg>
 <div id="dbg" class="a" style="left:522.600px;top:307.900px;width:330px;font-family:'Liberation Mono','Noto Sans CJK JP',monospace;font-size:12.260px;line-height:18.400px;color:#333;white-space:pre">  { <span class="k">_msgid</span>: <span class="s">"45c7f6ccf75875f3"</span>, <span class="k">payload</span>: <span class="s">"</span>
<span class="s"><span class="j">現在は</span> 2022<span class="j">年</span>12<span class="j">月</span>10<span class="j">日</span> 06<span class="j">時</span>40<span class="j">分</span>38<span class="j">秒</span> <span class="j">です。</span>"</span>,
<span class="k">topic</span>: <span class="s">"<span class="j">日時情報</span>"</span>, <span class="k">settings</span>: <span class="m">object</span>, <span class="k">to</span>:
<span class="s">"          @gmail.com"</span> }</div>
 <div class="a" style="left:529.400px;top:364.600px;width:72.400px;height:15.400px;background:#4f81bd;border:1px solid #385d8a"></div>


<!-- inset border -->
<div class="a" style="left:494px;top:174px;width:367px;height:1.300px;background:#000"></div>
<div class="a" style="left:494px;top:174px;width:1.300px;height:218px;background:#000"></div>
<div class="a" style="left:859px;top:174px;width:1.500px;height:218px;background:#000;transform:translateX(.4px)"></div>
<div class="a" style="left:494px;top:390.600px;width:367px;height:1.400px;background:#000"></div>
<!-- arrow -->
<svg style="left:0;top:0" width="907" height="425" viewBox="0 0 907 425"><path d="M691.600 147.800L709.500 161L687.300 189.700L697.400 195.900L666.800 200.200L661.600 168.700L670.200 177.300Z" fill="#c0504d" stroke="#8c3836" stroke-width="1.900" stroke-linejoin="miter"/></svg>
<!--INSET_END-->
<div class="a" style="left:906px;top:4.600px;width:1px;height:421px;background:#505050"></div>
<div class="a" style="left:0;top:423px;width:907px;height:2px;background:#5a5a5a"></div>
</body></html>
